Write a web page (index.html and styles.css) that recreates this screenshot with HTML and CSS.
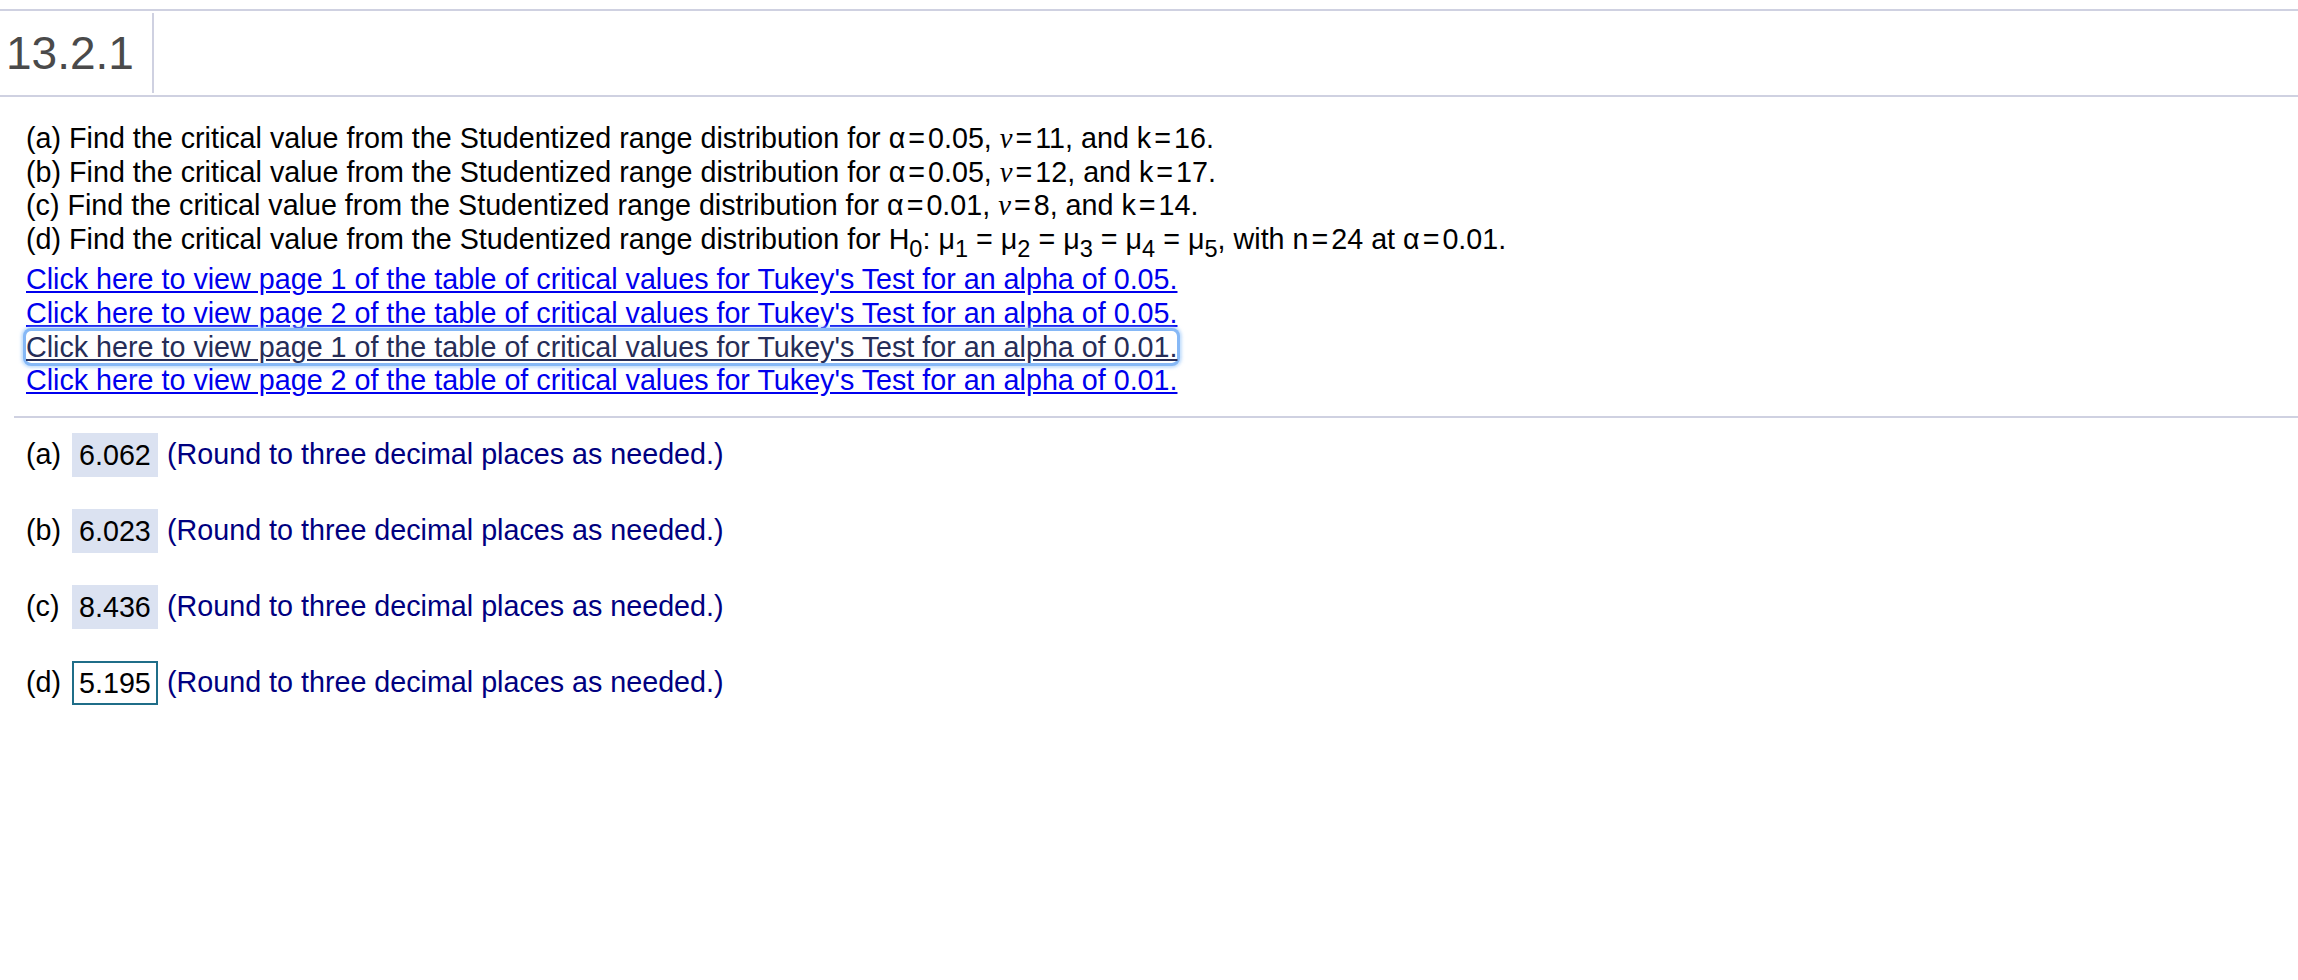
FILE: index.html
```html
<!DOCTYPE html>
<html>
<head>
<meta charset="utf-8">
<link rel="stylesheet" href="styles.css">
</head>
<body>
<div class="header">
  <div class="title">13.2.1</div>
</div>
<div class="question">
  <div class="line">(a) Find the critical value from the Studentized range distribution for <span class="sym">α</span><span class="eq">=</span>0.05, <span class="nu">ν</span><span class="eq">=</span>11, and k<span class="eq">=</span>16.</div>
  <div class="line">(b) Find the critical value from the Studentized range distribution for <span class="sym">α</span><span class="eq">=</span>0.05, <span class="nu">ν</span><span class="eq">=</span>12, and k<span class="eq">=</span>17.</div>
  <div class="line">(c) Find the critical value from the Studentized range distribution for <span class="sym">α</span><span class="eq">=</span>0.01, <span class="nu">ν</span><span class="eq">=</span>8, and k<span class="eq">=</span>14.</div>
  <div class="line">(d) Find the critical value from the Studentized range distribution for H<sub class="sb">0</sub>: μ<sub class="sb">1</sub><span class="eqw">=</span>μ<sub class="sb">2</sub><span class="eqw">=</span>μ<sub class="sb">3</sub><span class="eqw">=</span>μ<sub class="sb">4</sub><span class="eqw">=</span>μ<sub class="sb">5</sub>, with n<span class="eq">=</span>24 at <span class="sym">α</span><span class="eq">=</span>0.01.</div>
</div>
<div class="links">
  <div class="line"><a class="link" href="#">Click here to view page 1 of the table of critical values for Tukey's Test for an alpha of 0.05.</a></div>
  <div class="line"><a class="link" href="#">Click here to view page 2 of the table of critical values for Tukey's Test for an alpha of 0.05.</a></div>
  <div class="line"><a class="link focused" href="#">Click here to view page 1 of the table of critical values for Tukey's Test for an alpha of 0.01.</a></div>
  <div class="line"><a class="link" href="#">Click here to view page 2 of the table of critical values for Tukey's Test for an alpha of 0.01.</a></div>
</div>
<div class="divider"></div>
<div class="answers">
  <div class="row"><span class="label">(a)</span><span class="ans">6.062</span><span class="hint">(Round to three decimal places as needed.)</span></div>
  <div class="row"><span class="label">(b)</span><span class="ans">6.023</span><span class="hint">(Round to three decimal places as needed.)</span></div>
  <div class="row"><span class="label">(c)</span><span class="ans">8.436</span><span class="hint">(Round to three decimal places as needed.)</span></div>
  <div class="row"><span class="label">(d)</span><span class="ans active">5.195</span><span class="hint">(Round to three decimal places as needed.)</span></div>
</div>
</body>
</html>
```
FILE: styles.css
```css
html, body {
  margin: 0;
  padding: 0;
  background: #ffffff;
}
body {
  font-family: "Liberation Sans", Arial, Helvetica, sans-serif;
  font-size: 28.7px;
  color: #000000;
}
.header {
  margin-top: 9px;
  height: 84px;
  border-top: 2px solid #cfd1e1;
  border-bottom: 2px solid #cfd1e1;
  display: flex;
  align-items: center;
}
.title {
  width: 146px;
  height: 80px;
  padding-left: 6px;
  line-height: 80px;
  font-size: 46px;
  color: #4a4a4a;
  border-right: 2px solid #cfd1e1;
}
.question {
  margin-top: 25px;
  padding-left: 26px;
}
.line {
  line-height: 33.6px;
  height: 33.6px;
  white-space: nowrap;
}
.nu {
  font-family: "Liberation Serif", "Times New Roman", serif;
  font-style: italic;
}
.eq {
  padding: 0 3px;
}
.eqw {
  padding: 0 8px;
}
.sb {
  font-size: 0.82em;
  line-height: 0;
  vertical-align: -0.34em;
}
.links {
  margin-top: 7px;
  padding-left: 26px;
}
.link {
  color: #0000ee;
  text-decoration: underline;
}
.link.focused {
  color: #262d57;
  border-radius: 5px;
  box-shadow: 0 0 0 3px #86b8f6, 0 0 3px 5px rgba(150, 196, 250, 0.55);
}
.divider {
  margin-top: 18px;
  margin-left: 14px;
  height: 2px;
  background: #cfd1e1;
}
.answers {
  padding-left: 26px;
  margin-top: 15px;
}
.row {
  display: flex;
  align-items: center;
  height: 44px;
  margin-bottom: 32px;
  white-space: nowrap;
}
.label {
  width: 46px;
}
.ans {
  box-sizing: border-box;
  width: 86px;
  height: 44px;
  line-height: 44px;
  padding-left: 7px;
  background: #dbe2f1;
}
.ans.active {
  background: #ffffff;
  border: 2px solid #1f6d88;
  line-height: 40px;
  padding-left: 5px;
}
.hint {
  margin-left: 9px;
  color: #000080;
}
```
